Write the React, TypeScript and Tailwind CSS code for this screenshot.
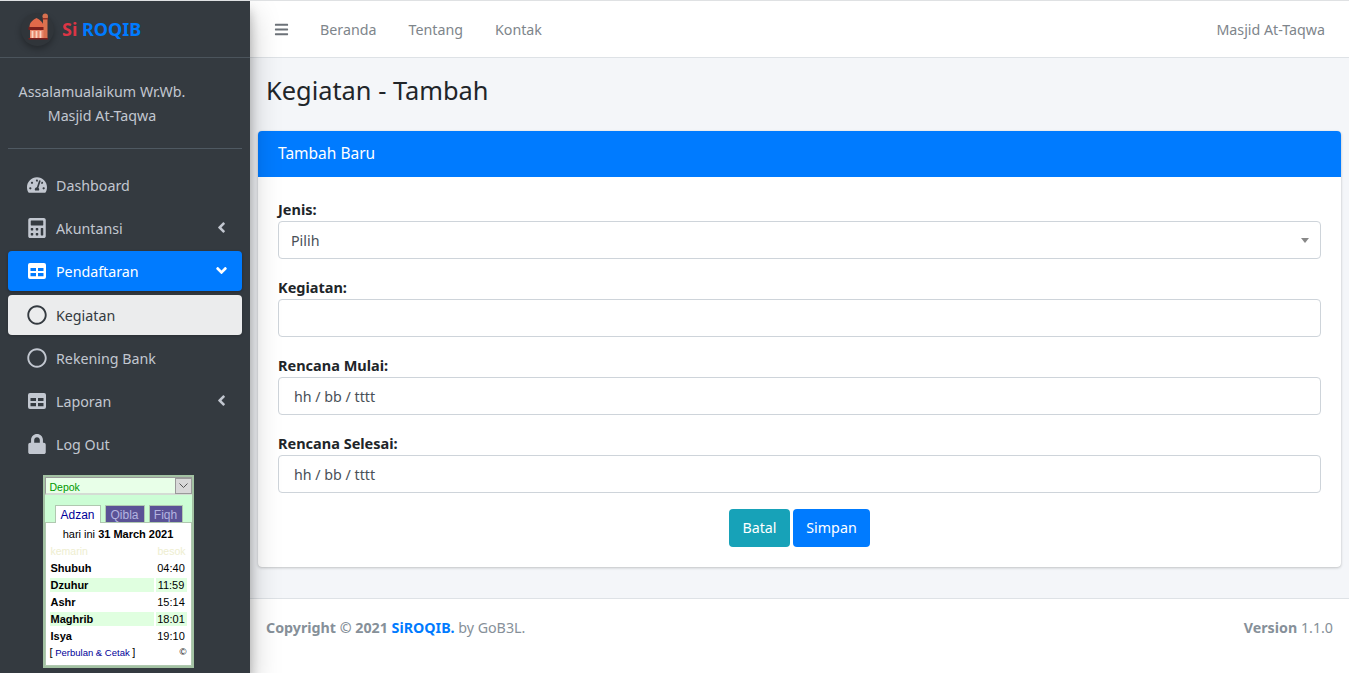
import { FaTachometerAlt, FaCalculator, FaLock, FaBars, FaAngleLeft, FaAngleDown, FaRegCircle } from "react-icons/fa";

const sans = "font-['Noto_Sans',sans-serif]";

function Logo() {
  return (
    <div className="w-[33px] h-[33px] rounded-full bg-[#30353a] shadow-[0_3px_6px_rgba(0,0,0,0.3)] flex items-center justify-center">
      <svg width="21" height="27" viewBox="0 0 21 27" className="-mt-[6px] ml-[2px] shrink-0">
        <path d="M1.500 14 C1.500 9 5 7 8.500 5 C12 7 15.500 9 15.500 14 Z" fill="#e2694a" />
        <rect x="15" y="4" width="4.500" height="22" fill="#d9714f" />
        <circle cx="17.200" cy="3.200" r="2.700" fill="#d9714f" />
        <rect x="14.500" y="5" width="5.500" height="1.500" fill="#8f2f25" />
        <rect x="0.500" y="14" width="15" height="3" fill="#7b1f1c" />
        <rect x="2" y="17" width="13.500" height="8.500" fill="#e8866a" />
        <path d="M4.500 18v7M8.500 18v7M12.500 18v7" stroke="#f7d3c0" strokeWidth="1.800" />
        <rect x="0.500" y="25" width="19.500" height="1.500" fill="#7b1f1c" />
      </svg>
    </div>
  );
}

function TableIcon() {
  return (
    <svg width="18" height="16" viewBox="0 0 18 16" fill="currentColor">
      <path
        fillRule="evenodd"
        d="M2 0h14a2 2 0 0 1 2 2v12a2 2 0 0 1-2 2H2a2 2 0 0 1-2-2V2a2 2 0 0 1 2-2zM2.500 5v3h5.500V5zM10 5v3h5.500V5zM2.500 10v3.200h5.500V10zM10 10v3.200h5.500V10z"
      />
    </svg>
  );
}

function NavItem({ icon, label, state, arrow }: { icon: React.ReactNode; label: string; state?: "active" | "sub"; arrow?: "left" | "down" }) {
  const tone =
    state === "active"
      ? "bg-[#007bff] text-white shadow-[0_1px_3px_rgba(0,0,0,0.3)]"
      : state === "sub"
        ? "bg-[#ebeced] text-[#343a40] shadow-[0_1px_3px_rgba(0,0,0,0.2)]"
        : "text-[#c2c7d0]";
  return (
    <div className={`h-10 rounded flex items-center pl-[19px] pr-[12px] ${tone}`}>
      <span className="w-5 flex justify-center text-[20px] mr-[9px] shrink-0">{icon}</span>
      <span className="flex-1 text-[14.250px] mt-[1px]">{label}</span>
      {arrow === "left" && <FaAngleLeft className="text-[17px] -mt-[2px]" />}
      {arrow === "down" && <FaAngleDown className="text-[17px] -mt-[2px]" />}
    </div>
  );
}

function Prayer({ name, time, alt }: { name: string; time: string; alt?: boolean }) {
  return (
    <div className="flex h-[17px] gap-[2px] px-[4px] items-center text-[11px] text-black">
      <div className={`flex-1 h-[14px] leading-[14px] font-bold pl-[1px] ${alt ? "bg-[#e0ffe0]" : ""}`}>{name}</div>
      <div className={`w-[31px] h-[14px] leading-[14px] text-center ${alt ? "bg-[#e0ffe0]" : ""}`}>{time}</div>
    </div>
  );
}

function SholatWidget() {
  return (
    <div className="w-[151px] h-[193px] mx-auto border-2 border-[#a3c2a3] bg-[#ccfdd5] font-['Liberation_Sans',sans-serif] flex flex-col">
      <div className="h-[18px] bg-[#e8ffe8] border-t border-l border-t-[#999] border-l-[#999] border-b-2 border-b-[#d4dcd4] flex items-center justify-between text-[10.500px] text-[#009900] pl-[4px] pt-[4px]">
        Depok
        <span className="w-[17px] h-[16px] -mt-[4px] bg-[#d8d8d8] border border-[#999] flex items-center justify-center">
          <svg width="9" height="5" viewBox="0 0 9 5" fill="none" stroke="#555" strokeWidth="1">
            <path d="M0.500 0.500L4.500 4.500L8.500 0.500" />
          </svg>
        </span>
      </div>
      <div className="flex gap-1 pl-[10px] pt-[10px] h-[27px] text-[12px] leading-[19px]">
        <div className="w-[46px] h-[18px] bg-white border border-[#b0c8b0] border-b-0 text-center text-[#000099] relative z-10">Adzan</div>
        <div className="w-10 h-[17px] bg-[#5a5296] border border-[#b0c8b0] border-b-0 text-center text-[#b4b4e0] overflow-hidden">Qibla</div>
        <div className="w-[34px] h-[17px] bg-[#5a5296] border border-[#b0c8b0] border-b-0 text-center text-[#b4b4e0] overflow-hidden">Fiqh</div>
      </div>
      <div className="flex-1 bg-white border border-[#b0c8b0] flex flex-col">
        <div className="text-center text-[11px] text-black h-[22px] leading-[22px]">hari ini <b>31 March 2021</b></div>
        <div className="flex justify-between px-[5px] text-[10.500px] text-[#eeeed0] h-[14px] leading-[13px]">
          <span>kemarin</span>
          <span>besok</span>
        </div>
        <div>
          <Prayer name="Shubuh" time="04:40" />
          <Prayer name="Dzuhur" time="11:59" alt />
          <Prayer name="Ashr" time="15:14" />
          <Prayer name="Maghrib" time="18:01" alt />
          <Prayer name="Isya" time="19:10" />
        </div>
        <div className="flex justify-between items-center px-[4px] text-[9.500px] h-[16px] text-[#000099]">
          <span><span className="text-black text-[11px]">[</span> Perbulan &amp; Cetak <span className="text-black text-[11px]">]</span></span>
          <span className="text-black">©</span>
        </div>
      </div>
    </div>
  );
}

function Sidebar() {
  return (
    <aside className="w-[250px] shrink-0 bg-[#343a40] flex flex-col shadow-[0_14px_28px_rgba(0,0,0,0.25),0_10px_10px_rgba(0,0,0,0.22)] z-20">
      <div className="h-[57px] border-b border-[#4b545c] flex items-center pl-[21px] gap-[8px]">
        <Logo />
        <span className="text-[18px] font-bold mt-[1px] whitespace-nowrap">
          <span className="text-[#dc3545]">Si</span> <span className="text-[#007bff]">ROQIB</span>
        </span>
      </div>
      <div className="mx-2 h-[91px] border-b border-[#4f5962] pt-[22px] text-[#c2c7d0] text-[14.250px] leading-6">
        <div className="w-[188px] text-center">Assalamualaikum Wr.Wb.</div>
        <div className="w-[188px] text-center">Masjid At-Taqwa</div>
      </div>
      <nav className="mx-2 mt-4 flex flex-col gap-[3px]">
        <NavItem icon={<FaTachometerAlt />} label="Dashboard" />
        <NavItem icon={<FaCalculator />} label="Akuntansi" arrow="left" />
        <NavItem icon={<TableIcon />} label="Pendaftaran" state="active" arrow="down" />
        <div className="mt-[1px]">
          <NavItem icon={<FaRegCircle />} label="Kegiatan" state="sub" />
        </div>
        <NavItem icon={<FaRegCircle />} label="Rekening Bank" />
        <NavItem icon={<TableIcon />} label="Laporan" arrow="left" />
        <NavItem icon={<FaLock />} label="Log Out" />
      </nav>
      <div className="mt-[11px] pr-[14px]">
        <SholatWidget />
      </div>
    </aside>
  );
}

function Field({ label, children }: { label: string; children: React.ReactNode }) {
  return (
    <div className="mb-4">
      <label className="block font-bold text-[14.500px] leading-6 text-[#212529]">{label}</label>
      {children}
    </div>
  );
}

const boxCls = "w-full h-[38px] rounded border border-[#ced4da] bg-white text-[#495057] text-[14.250px] px-[15px] flex items-center";

export default function App() {
  return (
    <div className={`h-[673px] w-[1349px] flex flex-col overflow-hidden bg-[#f4f6f9] border-t border-[#dfe1e3] ${sans}`}>
      <div className="flex-1 flex min-h-0">
        <Sidebar />
        <div className="flex-1 flex flex-col min-w-0">
          <header className="h-[57px] bg-white border-b border-[#dee2e6] flex items-center text-[#7e858b] text-[14.250px] pl-[24px] pr-[24px]">
            <FaBars className="text-[15px] mr-[31px] text-[#6c7278]" />
            <div className="flex gap-8 flex-1 mt-[1px]">
              <span>Beranda</span>
              <span>Tentang</span>
              <span>Kontak</span>
            </div>
            <span className="mt-[1px]">Masjid At-Taqwa</span>
          </header>
          <main className="flex-1 px-2">
            <h1 className="text-[25.400px] leading-[34px] text-[#212529] pl-2 pt-[15px] pb-[24px]">Kegiatan - Tambah</h1>
            <section className="bg-white rounded shadow-[0_0_1px_rgba(0,0,0,0.125),0_1px_3px_rgba(0,0,0,0.2)] h-[436px]">
              <div className="h-[46px] bg-[#007bff] rounded-t px-5 flex items-center text-white text-[15.500px] pb-[1px]">Tambah Baru</div>
              <form className="px-5 pt-5">
                <Field label="Jenis:">
                  <div className={`${boxCls} justify-between !px-[12px]`}>
                    <span className="mt-[1px]">Pilih</span>
                    <span className="w-0 h-0 border-x-[4px] border-x-transparent border-t-[5px] border-t-[#888] mr-[-1px]" />
                  </div>
                </Field>
                <Field label="Kegiatan:">
                  <input className={boxCls} />
                </Field>
                <Field label="Rencana Mulai:">
                  <input className={boxCls} defaultValue="hh / bb / tttt" />
                </Field>
                <Field label="Rencana Selesai:">
                  <input className={boxCls} defaultValue="hh / bb / tttt" />
                </Field>
                <div className="flex justify-center gap-[3px] text-white text-[14.250px]">
                  <button type="button" className="h-[38px] w-[61px] rounded bg-[#17a2b8]">Batal</button>
                  <button type="button" className="h-[38px] w-[77px] rounded bg-[#007bff]">Simpan</button>
                </div>
              </form>
            </section>
          </main>
          <footer className="h-[75px] bg-white border-t border-[#dee2e6] px-4 pb-[16px] flex items-center justify-between text-[#869099] text-[14.250px]">
            <span>
              <b>Copyright © 2021 <span className="text-[#007bff]">SiROQIB.</span></b> by GoB3L.
            </span>
            <span><b>Version</b> 1.1.0</span>
          </footer>
        </div>
      </div>
    </div>
  );
}
